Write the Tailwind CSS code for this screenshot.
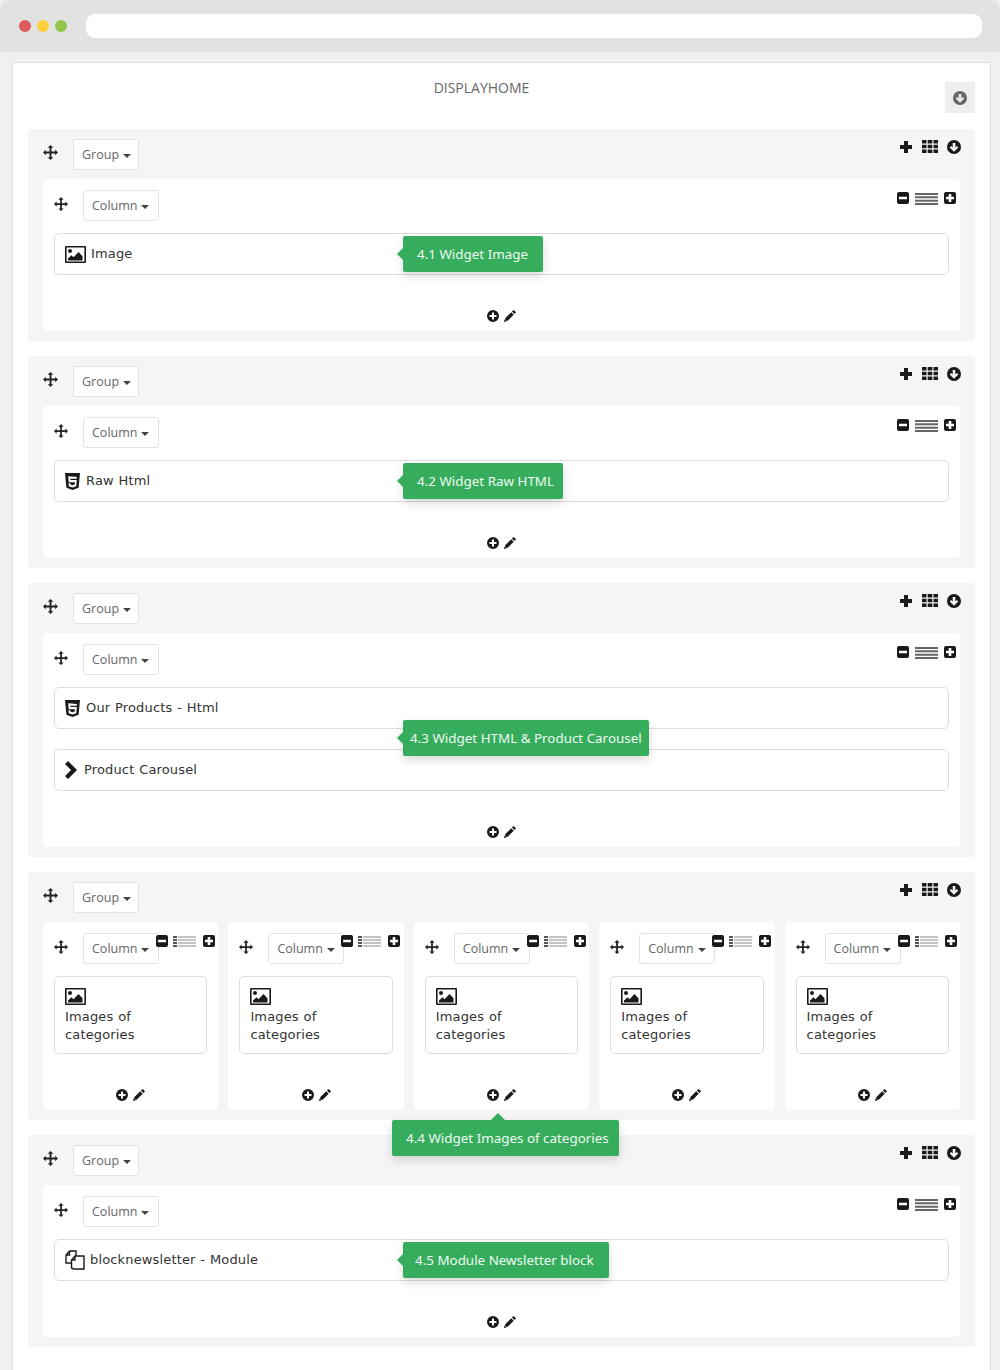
<!DOCTYPE html>
<html lang="en">
<head>
  <meta charset="UTF-8" />
  <title>Displayhome</title>
  <script src="https://cdn.jsdelivr.net/npm/@tailwindcss/browser@4"></script>
</head>
<body class="bg-[#eef0f1] font-['Open_Sans',sans-serif] h-[1370px] overflow-hidden">
  <svg class="hidden">
    <symbol id="move" viewBox="0 0 16 16"><path d="M8 0l3 3H9v4h4V5l3 3-3 3V9H9v4h2l-3 3-3-3h2V9H3v2L0 8l3-3v2h4V3H5z"/></symbol>
    <symbol id="plus" viewBox="0 0 14 14"><path d="M5 1h4v4h4v4H9v4H5V9H1V5h4z"/></symbol>
    <symbol id="grid" viewBox="0 0 16 13"><path d="M0 0h4.500v3.500H0zM5.700 0h4.600v3.500H5.700zM11.500 0H16v3.500h-4.500zM0 4.700h4.500v3.600H0zM5.700 4.700h4.600v3.600H5.700zM11.500 4.700H16v3.600h-4.500zM0 9.500h4.500V13H0zM5.700 9.500h4.600V13H5.700zM11.500 9.500H16V13h-4.500z"/></symbol>
    <symbol id="circle-down" viewBox="0 0 16 16"><path fill-rule="evenodd" d="M8 1a7 7 0 110 14A7 7 0 018 1zM8 12.800l4.300-4.300-1.500-1.500-1.500 1.500V4H6.700v4.500L5.200 7 3.700 8.500z"/></symbol>
    <symbol id="minus-square" viewBox="0 0 12 12"><path fill-rule="evenodd" d="M2 0h8a2 2 0 012 2v8a2 2 0 01-2 2H2a2 2 0 01-2-2V2a2 2 0 012-2zM2 4.700v2.600h8V4.700z"/></symbol>
    <symbol id="plus-square" viewBox="0 0 12 12"><path fill-rule="evenodd" d="M2 0h8a2 2 0 012 2v8a2 2 0 01-2 2H2a2 2 0 01-2-2V2a2 2 0 012-2zM4.700 2v2.700H2v2.600h2.700V10h2.600V7.300H10V4.700H7.300V2z"/></symbol>
    <symbol id="lines" viewBox="0 0 23 12"><path d="M0 0h23v2H0zM0 3.300h23v2H0zM0 6.700h23v2H0zM0 10h23v2H0z"/></symbol>
    <symbol id="list" viewBox="0 0 23 11"><path fill="#555" d="M0 0h4v2H0zM0 3h4v2H0zM0 6h4v2H0zM0 9h4v2H0z"/><path fill="#c4c4c4" d="M5 0h18v2H5zM5 3h18v2H5zM5 6h18v2H5zM5 9h18v2H5z"/></symbol>
    <symbol id="plus-circle" viewBox="0 0 12 12"><path fill-rule="evenodd" d="M6 0a6 6 0 110 12A6 6 0 016 0zM5 2.500V5H2.500v2H5v2.500h2V7h2.500V5H7V2.500z"/></symbol>
    <symbol id="pencil" viewBox="0 0 12 12"><path d="M9 .500a1 1 0 011.300 0l1.200 1.200a1 1 0 010 1.300l-1.100 1.100-2.500-2.500zM7.200 2.300l2.500 2.500-6 6H1.200V8.300z"/><path d="M.500 9.500L2.500 11.500 0 12z"/></symbol>
    <symbol id="image" viewBox="0 0 21 17"><path fill-rule="evenodd" d="M1 0h19a1 1 0 011 1v15a1 1 0 01-1 1H1a1 1 0 01-1-1V1a1 1 0 011-1zM1.600 1.600v13.800h17.800V1.600z"/><circle cx="5" cy="5" r="2"/><path d="M3 14.500v-2l3.500-3.200 2 2 5-5.300 4 4.300v4.200z"/></symbol>
    <symbol id="html5" viewBox="0 0 15 17"><path fill-rule="evenodd" d="M0 0h15l-1.400 14.800L7.500 17l-6.100-2.200zM3.200 3.200l.5 6h6.200l-.2 2.400-2.200.7-2.200-.7-.1-1.300H3.500l.3 2.900 3.700 1.200 3.700-1.200.6-6.200H5.500l-.2-1.300h6.400l.2-1.700z"/></symbol>
    <symbol id="chevron" viewBox="0 0 13 18"><path d="M3 0l9 9-9 9-3-3 6-6-6-6z"/></symbol>
    <symbol id="files" viewBox="0 0 20 20"><path fill="none" stroke="currentColor" stroke-width="1.400" d="M4.500 1H11v4.500M4.500 1L1 5v8h5.500M4.500 1v4H1M10 6h9v13H8.500l-2-1V10zM10 6v4H6.500"/></symbol>
  </svg>

  <!-- browser chrome -->
  <div class="h-[52px] bg-[#e2e2e2] rounded-t-[10px] flex items-center pl-[19px] pr-[18px]">
    <span class="w-3 h-3 rounded-full bg-[#dd5c5c]"></span>
    <span class="w-3 h-3 rounded-full bg-[#fdcf3d] ml-[6px]"></span>
    <span class="w-3 h-3 rounded-full bg-[#93c54b] ml-[6px]"></span>
    <span class="flex-1 h-6 rounded-[9px] bg-white ml-[19px]"></span>
  </div>

  <main class="mx-[12px] mt-[10px] bg-white border border-[#dcdfe1] border-b-0 h-[1310px] pt-[19px] pl-[15px] w-[979px]">
    <div class="relative h-[47px] w-[947px]">
      <h1 class="text-[14px] leading-[12px] text-[#666] text-center w-[907px]">DISPLAYHOME</h1>
      <button class="absolute right-0 top-0 w-[30px] h-[31px] bg-[#eeeeee] flex items-center justify-center text-[#666]"><svg class="w-4 h-4 fill-current"><use href="#circle-down"/></svg></button>
    </div>

    <!-- 4.1 -->
    <section class="bg-[#f5f5f5] rounded-[3px] px-[15px] pt-[10px] pb-[10px] mb-[15px] w-[947px]">
      <div class="flex h-[31px] mb-[9px]">
        <svg class="w-[15px] h-[15px] mt-[6px] text-[#222] fill-current"><use href="#move"/></svg>
        <button class="ml-[15px] w-[66px] h-[31px] bg-white border border-[#e3e3e3] rounded-[3px] text-[12.500px] text-[#666] flex items-center pl-2 pt-[2px]">Group<span class="ml-[4px] border-x-4 border-x-transparent border-t-4 border-t-[#444]"></span></button>
        <div class="ml-auto flex items-start gap-[8px] -mr-[2px] text-[#1a1a1a]">
          <svg class="w-[14px] h-[14px] fill-current mt-[1px] mr-[1px]"><use href="#plus"/></svg>
          <svg class="w-[16px] h-[13px] fill-current mt-[1px]"><use href="#grid"/></svg>
          <svg class="w-[16px] h-[16px] fill-current"><use href="#circle-down"/></svg>
        </div>
      </div>
      <div class="bg-white rounded-[5px] px-[11px] pt-[11px] pb-[8px]">
        <div class="flex h-[31px] mb-[12px]">
          <svg class="w-[14px] h-[14px] mt-[7px] text-[#222] fill-current"><use href="#move"/></svg>
          <button class="ml-[15px] w-[76px] h-[31px] bg-white border border-[#e3e3e3] rounded-[3px] text-[12.500px] text-[#666] flex items-center pl-2 pt-[2px]">Column<span class="ml-[4px] border-x-4 border-x-transparent border-t-4 border-t-[#444]"></span></button>
          <div class="ml-auto flex items-start gap-[6px] mt-[2px] -mr-[7px] text-[#1a1a1a]">
            <svg class="w-[12px] h-[12px] fill-current"><use href="#minus-square"/></svg>
            <svg class="w-[23px] h-[12px] mt-[1px] fill-[#666]"><use href="#lines"/></svg>
            <svg class="w-[12px] h-[12px] fill-current"><use href="#plus-square"/></svg>
          </div>
        </div>
        <div class="relative h-[42px] border border-[#dddddd] rounded-[5px] flex items-center pl-[10px] font-['DejaVu_Sans',sans-serif] text-[13px] tracking-[0.15px] [word-spacing:0.5px] text-[#333]">
          <svg class="w-[21px] h-[17px] mr-[5px] text-[#1a1a1a] fill-current"><use href="#image"/></svg>Image
          <div class="absolute left-[348px] top-[2px] w-[140px] h-[36px] pl-[14px] bg-[#36ad5c] rounded-[2px] shadow-[0_4px_10px_rgba(0,0,0,0.15)] font-['Noto_Sans',sans-serif] text-[13.400px] leading-[36px] tracking-normal [word-spacing:0] text-[#eefaf2] whitespace-nowrap">
            <span class="absolute -left-[6px] top-[12px] border-y-[6px] border-y-transparent border-r-[6px] border-r-[#36ad5c]"></span>4.1 Widget Image
          </div>
        </div>
        <div class="flex justify-center gap-[5px] mt-[34px] h-[14px] items-center text-[#1a1a1a]">
          <svg class="w-[12px] h-[12px] fill-current"><use href="#plus-circle"/></svg>
          <svg class="w-[12px] h-[12px] fill-current"><use href="#pencil"/></svg>
        </div>
      </div>
    </section>

    <!-- 4.2 -->
    <section class="bg-[#f5f5f5] rounded-[3px] px-[15px] pt-[10px] pb-[10px] mb-[15px] w-[947px]">
      <div class="flex h-[31px] mb-[9px]">
        <svg class="w-[15px] h-[15px] mt-[6px] text-[#222] fill-current"><use href="#move"/></svg>
        <button class="ml-[15px] w-[66px] h-[31px] bg-white border border-[#e3e3e3] rounded-[3px] text-[12.500px] text-[#666] flex items-center pl-2 pt-[2px]">Group<span class="ml-[4px] border-x-4 border-x-transparent border-t-4 border-t-[#444]"></span></button>
        <div class="ml-auto flex items-start gap-[8px] -mr-[2px] text-[#1a1a1a]">
          <svg class="w-[14px] h-[14px] fill-current mt-[1px] mr-[1px]"><use href="#plus"/></svg>
          <svg class="w-[16px] h-[13px] fill-current mt-[1px]"><use href="#grid"/></svg>
          <svg class="w-[16px] h-[16px] fill-current"><use href="#circle-down"/></svg>
        </div>
      </div>
      <div class="bg-white rounded-[5px] px-[11px] pt-[11px] pb-[8px]">
        <div class="flex h-[31px] mb-[12px]">
          <svg class="w-[14px] h-[14px] mt-[7px] text-[#222] fill-current"><use href="#move"/></svg>
          <button class="ml-[15px] w-[76px] h-[31px] bg-white border border-[#e3e3e3] rounded-[3px] text-[12.500px] text-[#666] flex items-center pl-2 pt-[2px]">Column<span class="ml-[4px] border-x-4 border-x-transparent border-t-4 border-t-[#444]"></span></button>
          <div class="ml-auto flex items-start gap-[6px] mt-[2px] -mr-[7px] text-[#1a1a1a]">
            <svg class="w-[12px] h-[12px] fill-current"><use href="#minus-square"/></svg>
            <svg class="w-[23px] h-[12px] mt-[1px] fill-[#666]"><use href="#lines"/></svg>
            <svg class="w-[12px] h-[12px] fill-current"><use href="#plus-square"/></svg>
          </div>
        </div>
        <div class="relative h-[42px] border border-[#dddddd] rounded-[5px] flex items-center pl-[10px] font-['DejaVu_Sans',sans-serif] text-[13px] tracking-[0.15px] [word-spacing:0.5px] text-[#333]">
          <svg class="w-[15px] h-[17px] mr-[6px] text-[#1a1a1a] fill-current"><use href="#html5"/></svg>Raw Html
          <div class="absolute left-[348px] top-[2px] w-[160px] h-[36px] pl-[14px] bg-[#36ad5c] rounded-[2px] shadow-[0_4px_10px_rgba(0,0,0,0.15)] font-['Noto_Sans',sans-serif] text-[13.400px] leading-[36px] tracking-normal [word-spacing:0] text-[#eefaf2] whitespace-nowrap">
            <span class="absolute -left-[6px] top-[12px] border-y-[6px] border-y-transparent border-r-[6px] border-r-[#36ad5c]"></span>4.2 Widget Raw HTML
          </div>
        </div>
        <div class="flex justify-center gap-[5px] mt-[34px] h-[14px] items-center text-[#1a1a1a]">
          <svg class="w-[12px] h-[12px] fill-current"><use href="#plus-circle"/></svg>
          <svg class="w-[12px] h-[12px] fill-current"><use href="#pencil"/></svg>
        </div>
      </div>
    </section>

    <!-- 4.3 -->
    <section class="bg-[#f5f5f5] rounded-[3px] px-[15px] pt-[10px] pb-[10px] mb-[15px] w-[947px]">
      <div class="flex h-[31px] mb-[9px]">
        <svg class="w-[15px] h-[15px] mt-[6px] text-[#222] fill-current"><use href="#move"/></svg>
        <button class="ml-[15px] w-[66px] h-[31px] bg-white border border-[#e3e3e3] rounded-[3px] text-[12.500px] text-[#666] flex items-center pl-2 pt-[2px]">Group<span class="ml-[4px] border-x-4 border-x-transparent border-t-4 border-t-[#444]"></span></button>
        <div class="ml-auto flex items-start gap-[8px] -mr-[2px] text-[#1a1a1a]">
          <svg class="w-[14px] h-[14px] fill-current mt-[1px] mr-[1px]"><use href="#plus"/></svg>
          <svg class="w-[16px] h-[13px] fill-current mt-[1px]"><use href="#grid"/></svg>
          <svg class="w-[16px] h-[16px] fill-current"><use href="#circle-down"/></svg>
        </div>
      </div>
      <div class="bg-white rounded-[5px] px-[11px] pt-[11px] pb-[8px]">
        <div class="flex h-[31px] mb-[12px]">
          <svg class="w-[14px] h-[14px] mt-[7px] text-[#222] fill-current"><use href="#move"/></svg>
          <button class="ml-[15px] w-[76px] h-[31px] bg-white border border-[#e3e3e3] rounded-[3px] text-[12.500px] text-[#666] flex items-center pl-2 pt-[2px]">Column<span class="ml-[4px] border-x-4 border-x-transparent border-t-4 border-t-[#444]"></span></button>
          <div class="ml-auto flex items-start gap-[6px] mt-[2px] -mr-[7px] text-[#1a1a1a]">
            <svg class="w-[12px] h-[12px] fill-current"><use href="#minus-square"/></svg>
            <svg class="w-[23px] h-[12px] mt-[1px] fill-[#666]"><use href="#lines"/></svg>
            <svg class="w-[12px] h-[12px] fill-current"><use href="#plus-square"/></svg>
          </div>
        </div>
        <div class="relative flex flex-col gap-[20px]">
          <div class="h-[42px] border border-[#dddddd] rounded-[5px] flex items-center pl-[10px] font-['DejaVu_Sans',sans-serif] text-[13px] tracking-[0.15px] [word-spacing:0.5px] text-[#333]">
            <svg class="w-[15px] h-[17px] mr-[6px] text-[#1a1a1a] fill-current"><use href="#html5"/></svg>Our Products - Html
          </div>
          <div class="h-[42px] border border-[#dddddd] rounded-[5px] flex items-center pl-[10px] font-['DejaVu_Sans',sans-serif] text-[13px] tracking-[0.15px] [word-spacing:0.5px] text-[#333]">
            <svg class="w-[13px] h-[18px] mr-[6px] text-[#1a1a1a] fill-current"><use href="#chevron"/></svg>Product Carousel
          </div>
          <div class="absolute left-[349px] top-[33px] w-[246px] h-[36px] pl-[7px] bg-[#36ad5c] rounded-[2px] shadow-[0_4px_10px_rgba(0,0,0,0.15)] font-['Noto_Sans',sans-serif] text-[13.400px] leading-[36px] tracking-normal [word-spacing:0] text-[#eefaf2] whitespace-nowrap">
            <span class="absolute -left-[6px] top-[12px] border-y-[6px] border-y-transparent border-r-[6px] border-r-[#36ad5c]"></span>4.3 Widget HTML &amp; Product Carousel
          </div>
        </div>
        <div class="flex justify-center gap-[5px] mt-[34px] h-[14px] items-center text-[#1a1a1a]">
          <svg class="w-[12px] h-[12px] fill-current"><use href="#plus-circle"/></svg>
          <svg class="w-[12px] h-[12px] fill-current"><use href="#pencil"/></svg>
        </div>
      </div>
    </section>

    <!-- 4.4 -->
    <section class="relative bg-[#f5f5f5] rounded-[3px] px-[15px] pt-[10px] pb-[10px] mb-[15px] w-[947px]">
      <div class="flex h-[31px] mb-[9px]">
        <svg class="w-[15px] h-[15px] mt-[6px] text-[#222] fill-current"><use href="#move"/></svg>
        <button class="ml-[15px] w-[66px] h-[31px] bg-white border border-[#e3e3e3] rounded-[3px] text-[12.500px] text-[#666] flex items-center pl-2 pt-[2px]">Group<span class="ml-[4px] border-x-4 border-x-transparent border-t-4 border-t-[#444]"></span></button>
        <div class="ml-auto flex items-start gap-[8px] -mr-[2px] text-[#1a1a1a]">
          <svg class="w-[14px] h-[14px] fill-current mt-[1px] mr-[1px]"><use href="#plus"/></svg>
          <svg class="w-[16px] h-[13px] fill-current mt-[1px]"><use href="#grid"/></svg>
          <svg class="w-[16px] h-[16px] fill-current"><use href="#circle-down"/></svg>
        </div>
      </div>
      <div class="grid grid-cols-5 gap-[10px]">
        <div class="bg-white rounded-[5px] px-[11px] pt-[11px] pb-[8px] h-[188px]">
          <div class="flex h-[31px] mb-[12px]">
            <svg class="w-[14px] h-[14px] mt-[7px] text-[#222] fill-current shrink-0"><use href="#move"/></svg>
            <button class="ml-[15px] w-[76px] h-[31px] shrink-0 bg-white border border-[#e3e3e3] rounded-[3px] text-[12.500px] text-[#666] flex items-center pl-2 pt-[2px]">Column<span class="ml-[4px] border-x-4 border-x-transparent border-t-4 border-t-[#444]"></span></button>
            <div class="flex items-start gap-[5px] mt-[2px] -ml-[3px] shrink-0 text-[#1a1a1a]">
              <svg class="w-[12px] h-[12px] fill-current"><use href="#minus-square"/></svg>
              <svg class="w-[23px] h-[11px] mt-[1px]"><use href="#list"/></svg>
              <svg class="w-[12px] h-[12px] ml-[2px] fill-current"><use href="#plus-square"/></svg>
            </div>
          </div>
          <div class="h-[78px] border border-[#dddddd] rounded-[5px] px-[10px] pt-[11px] font-['DejaVu_Sans',sans-serif] text-[13px] leading-[18px] tracking-[0.15px] [word-spacing:0.5px] text-[#333]">
            <svg class="block w-[21px] h-[17px] mb-[3px] text-[#1a1a1a] fill-current"><use href="#image"/></svg>Images of categories
          </div>
          <div class="flex justify-center gap-[5px] mt-[34px] h-[14px] items-center text-[#1a1a1a]">
            <svg class="w-[12px] h-[12px] fill-current"><use href="#plus-circle"/></svg>
            <svg class="w-[12px] h-[12px] fill-current"><use href="#pencil"/></svg>
          </div>
        </div>
        <div class="bg-white rounded-[5px] px-[11px] pt-[11px] pb-[8px] h-[188px]">
          <div class="flex h-[31px] mb-[12px]">
            <svg class="w-[14px] h-[14px] mt-[7px] text-[#222] fill-current shrink-0"><use href="#move"/></svg>
            <button class="ml-[15px] w-[76px] h-[31px] shrink-0 bg-white border border-[#e3e3e3] rounded-[3px] text-[12.500px] text-[#666] flex items-center pl-2 pt-[2px]">Column<span class="ml-[4px] border-x-4 border-x-transparent border-t-4 border-t-[#444]"></span></button>
            <div class="flex items-start gap-[5px] mt-[2px] -ml-[3px] shrink-0 text-[#1a1a1a]">
              <svg class="w-[12px] h-[12px] fill-current"><use href="#minus-square"/></svg>
              <svg class="w-[23px] h-[11px] mt-[1px]"><use href="#list"/></svg>
              <svg class="w-[12px] h-[12px] ml-[2px] fill-current"><use href="#plus-square"/></svg>
            </div>
          </div>
          <div class="h-[78px] border border-[#dddddd] rounded-[5px] px-[10px] pt-[11px] font-['DejaVu_Sans',sans-serif] text-[13px] leading-[18px] tracking-[0.15px] [word-spacing:0.5px] text-[#333]">
            <svg class="block w-[21px] h-[17px] mb-[3px] text-[#1a1a1a] fill-current"><use href="#image"/></svg>Images of categories
          </div>
          <div class="flex justify-center gap-[5px] mt-[34px] h-[14px] items-center text-[#1a1a1a]">
            <svg class="w-[12px] h-[12px] fill-current"><use href="#plus-circle"/></svg>
            <svg class="w-[12px] h-[12px] fill-current"><use href="#pencil"/></svg>
          </div>
        </div>
        <div class="bg-white rounded-[5px] px-[11px] pt-[11px] pb-[8px] h-[188px]">
          <div class="flex h-[31px] mb-[12px]">
            <svg class="w-[14px] h-[14px] mt-[7px] text-[#222] fill-current shrink-0"><use href="#move"/></svg>
            <button class="ml-[15px] w-[76px] h-[31px] shrink-0 bg-white border border-[#e3e3e3] rounded-[3px] text-[12.500px] text-[#666] flex items-center pl-2 pt-[2px]">Column<span class="ml-[4px] border-x-4 border-x-transparent border-t-4 border-t-[#444]"></span></button>
            <div class="flex items-start gap-[5px] mt-[2px] -ml-[3px] shrink-0 text-[#1a1a1a]">
              <svg class="w-[12px] h-[12px] fill-current"><use href="#minus-square"/></svg>
              <svg class="w-[23px] h-[11px] mt-[1px]"><use href="#list"/></svg>
              <svg class="w-[12px] h-[12px] ml-[2px] fill-current"><use href="#plus-square"/></svg>
            </div>
          </div>
          <div class="h-[78px] border border-[#dddddd] rounded-[5px] px-[10px] pt-[11px] font-['DejaVu_Sans',sans-serif] text-[13px] leading-[18px] tracking-[0.15px] [word-spacing:0.5px] text-[#333]">
            <svg class="block w-[21px] h-[17px] mb-[3px] text-[#1a1a1a] fill-current"><use href="#image"/></svg>Images of categories
          </div>
          <div class="flex justify-center gap-[5px] mt-[34px] h-[14px] items-center text-[#1a1a1a]">
            <svg class="w-[12px] h-[12px] fill-current"><use href="#plus-circle"/></svg>
            <svg class="w-[12px] h-[12px] fill-current"><use href="#pencil"/></svg>
          </div>
        </div>
        <div class="bg-white rounded-[5px] px-[11px] pt-[11px] pb-[8px] h-[188px]">
          <div class="flex h-[31px] mb-[12px]">
            <svg class="w-[14px] h-[14px] mt-[7px] text-[#222] fill-current shrink-0"><use href="#move"/></svg>
            <button class="ml-[15px] w-[76px] h-[31px] shrink-0 bg-white border border-[#e3e3e3] rounded-[3px] text-[12.500px] text-[#666] flex items-center pl-2 pt-[2px]">Column<span class="ml-[4px] border-x-4 border-x-transparent border-t-4 border-t-[#444]"></span></button>
            <div class="flex items-start gap-[5px] mt-[2px] -ml-[3px] shrink-0 text-[#1a1a1a]">
              <svg class="w-[12px] h-[12px] fill-current"><use href="#minus-square"/></svg>
              <svg class="w-[23px] h-[11px] mt-[1px]"><use href="#list"/></svg>
              <svg class="w-[12px] h-[12px] ml-[2px] fill-current"><use href="#plus-square"/></svg>
            </div>
          </div>
          <div class="h-[78px] border border-[#dddddd] rounded-[5px] px-[10px] pt-[11px] font-['DejaVu_Sans',sans-serif] text-[13px] leading-[18px] tracking-[0.15px] [word-spacing:0.5px] text-[#333]">
            <svg class="block w-[21px] h-[17px] mb-[3px] text-[#1a1a1a] fill-current"><use href="#image"/></svg>Images of categories
          </div>
          <div class="flex justify-center gap-[5px] mt-[34px] h-[14px] items-center text-[#1a1a1a]">
            <svg class="w-[12px] h-[12px] fill-current"><use href="#plus-circle"/></svg>
            <svg class="w-[12px] h-[12px] fill-current"><use href="#pencil"/></svg>
          </div>
        </div>
        <div class="bg-white rounded-[5px] px-[11px] pt-[11px] pb-[8px] h-[188px]">
          <div class="flex h-[31px] mb-[12px]">
            <svg class="w-[14px] h-[14px] mt-[7px] text-[#222] fill-current shrink-0"><use href="#move"/></svg>
            <button class="ml-[15px] w-[76px] h-[31px] shrink-0 bg-white border border-[#e3e3e3] rounded-[3px] text-[12.500px] text-[#666] flex items-center pl-2 pt-[2px]">Column<span class="ml-[4px] border-x-4 border-x-transparent border-t-4 border-t-[#444]"></span></button>
            <div class="flex items-start gap-[5px] mt-[2px] -ml-[3px] shrink-0 text-[#1a1a1a]">
              <svg class="w-[12px] h-[12px] fill-current"><use href="#minus-square"/></svg>
              <svg class="w-[23px] h-[11px] mt-[1px]"><use href="#list"/></svg>
              <svg class="w-[12px] h-[12px] ml-[2px] fill-current"><use href="#plus-square"/></svg>
            </div>
          </div>
          <div class="h-[78px] border border-[#dddddd] rounded-[5px] px-[10px] pt-[11px] font-['DejaVu_Sans',sans-serif] text-[13px] leading-[18px] tracking-[0.15px] [word-spacing:0.5px] text-[#333]">
            <svg class="block w-[21px] h-[17px] mb-[3px] text-[#1a1a1a] fill-current"><use href="#image"/></svg>Images of categories
          </div>
          <div class="flex justify-center gap-[5px] mt-[34px] h-[14px] items-center text-[#1a1a1a]">
            <svg class="w-[12px] h-[12px] fill-current"><use href="#plus-circle"/></svg>
            <svg class="w-[12px] h-[12px] fill-current"><use href="#pencil"/></svg>
          </div>
        </div>
      </div>
      <div class="absolute z-10 left-[364px] top-[248px] w-[227px] h-[36px] pl-[14px] bg-[#36ad5c] rounded-[2px] shadow-[0_4px_10px_rgba(0,0,0,0.15)] font-['Noto_Sans',sans-serif] text-[13.400px] leading-[36px] text-[#eefaf2] whitespace-nowrap">
        <span class="absolute left-[99px] -top-[7px] border-x-[7px] border-x-transparent border-b-[7px] border-b-[#36ad5c]"></span>4.4 Widget Images of categories
      </div>
    </section>

    <!-- 4.5 -->
    <section class="bg-[#f5f5f5] rounded-[3px] px-[15px] pt-[10px] pb-[10px] w-[947px]">
      <div class="flex h-[31px] mb-[9px]">
        <svg class="w-[15px] h-[15px] mt-[6px] text-[#222] fill-current"><use href="#move"/></svg>
        <button class="ml-[15px] w-[66px] h-[31px] bg-white border border-[#e3e3e3] rounded-[3px] text-[12.500px] text-[#666] flex items-center pl-2 pt-[2px]">Group<span class="ml-[4px] border-x-4 border-x-transparent border-t-4 border-t-[#444]"></span></button>
        <div class="ml-auto flex items-start gap-[8px] -mr-[2px] text-[#1a1a1a]">
          <svg class="w-[14px] h-[14px] fill-current mt-[1px] mr-[1px]"><use href="#plus"/></svg>
          <svg class="w-[16px] h-[13px] fill-current mt-[1px]"><use href="#grid"/></svg>
          <svg class="w-[16px] h-[16px] fill-current"><use href="#circle-down"/></svg>
        </div>
      </div>
      <div class="bg-white rounded-[5px] px-[11px] pt-[11px] pb-[8px]">
        <div class="flex h-[31px] mb-[12px]">
          <svg class="w-[14px] h-[14px] mt-[7px] text-[#222] fill-current"><use href="#move"/></svg>
          <button class="ml-[15px] w-[76px] h-[31px] bg-white border border-[#e3e3e3] rounded-[3px] text-[12.500px] text-[#666] flex items-center pl-2 pt-[2px]">Column<span class="ml-[4px] border-x-4 border-x-transparent border-t-4 border-t-[#444]"></span></button>
          <div class="ml-auto flex items-start gap-[6px] mt-[2px] -mr-[7px] text-[#1a1a1a]">
            <svg class="w-[12px] h-[12px] fill-current"><use href="#minus-square"/></svg>
            <svg class="w-[23px] h-[12px] mt-[1px] fill-[#666]"><use href="#lines"/></svg>
            <svg class="w-[12px] h-[12px] fill-current"><use href="#plus-square"/></svg>
          </div>
        </div>
        <div class="relative h-[42px] border border-[#dddddd] rounded-[5px] flex items-center pl-[10px] font-['DejaVu_Sans',sans-serif] text-[13px] tracking-[0.15px] [word-spacing:0.5px] text-[#333]">
          <svg class="w-[20px] h-[20px] mr-[5px] text-[#1a1a1a]"><use href="#files"/></svg>blocknewsletter - Module
          <div class="absolute left-[348px] top-[2px] w-[206px] h-[36px] pl-[12px] bg-[#36ad5c] rounded-[2px] shadow-[0_4px_10px_rgba(0,0,0,0.15)] font-['Noto_Sans',sans-serif] text-[13.400px] leading-[36px] tracking-normal [word-spacing:0] text-[#eefaf2] whitespace-nowrap">
            <span class="absolute -left-[6px] top-[12px] border-y-[6px] border-y-transparent border-r-[6px] border-r-[#36ad5c]"></span>4.5 Module Newsletter block
          </div>
        </div>
        <div class="flex justify-center gap-[5px] mt-[34px] h-[14px] items-center text-[#1a1a1a]">
          <svg class="w-[12px] h-[12px] fill-current"><use href="#plus-circle"/></svg>
          <svg class="w-[12px] h-[12px] fill-current"><use href="#pencil"/></svg>
        </div>
      </div>
    </section>
  </main>
</body>
</html>
